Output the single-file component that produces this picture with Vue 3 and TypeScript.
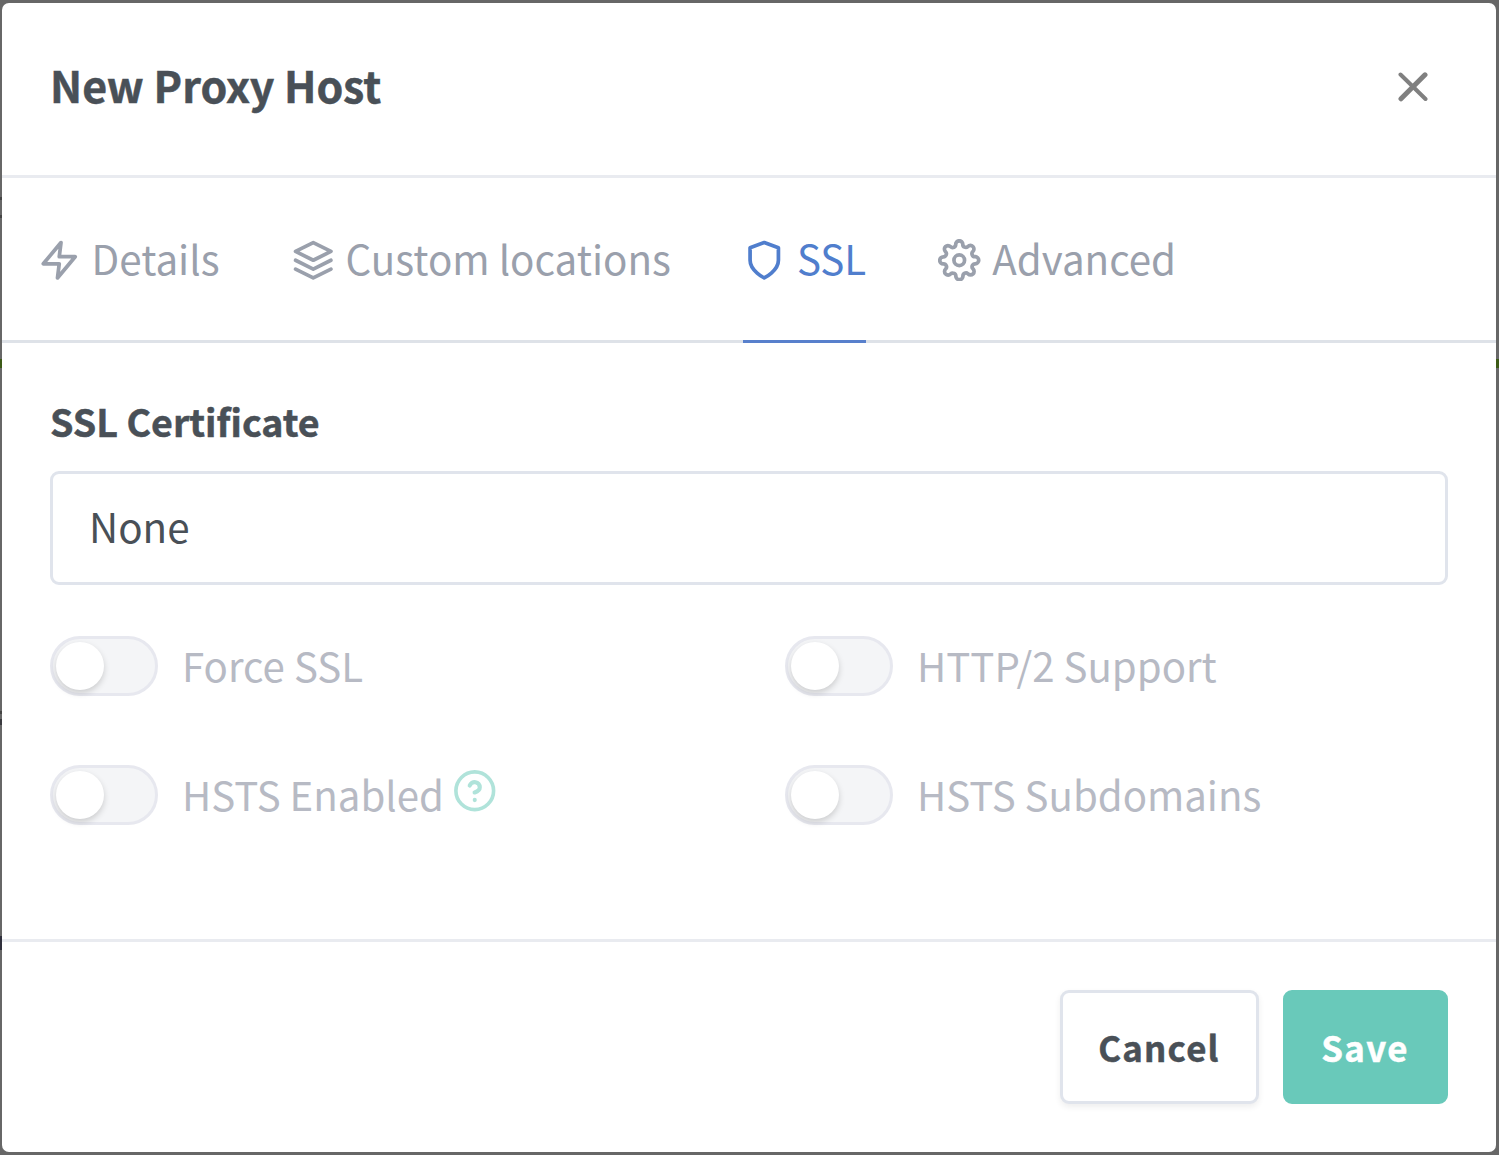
<script setup lang="ts">
import { ref } from 'vue'

interface Tab {
  id: string
  label: string
  icon: string[]
}

const tabs: Tab[] = [
  { id: 'details', label: 'Details', icon: ['M13 2 3 14h9l-1 8 10-12h-9l1-8z'] },
  {
    id: 'locations',
    label: 'Custom locations',
    icon: ['M12 2 2 7l10 5 10-5-10-5z', 'M2 17l10 5 10-5', 'M2 12l10 5 10-5'],
  },
  { id: 'ssl', label: 'SSL', icon: ['M12 22s8-4 8-10V5l-8-3-8 3v7c0 6 8 10 8 10z'] },
  {
    id: 'advanced',
    label: 'Advanced',
    icon: [
      'M12 9a3 3 0 1 0 0 6 3 3 0 0 0 0-6z',
      'M19.4 15a1.65 1.65 0 0 0 .33 1.82l.06.06a2 2 0 0 1 0 2.83 2 2 0 0 1-2.83 0l-.06-.06a1.65 1.65 0 0 0-1.82-.33 1.65 1.65 0 0 0-1 1.51V21a2 2 0 0 1-2 2 2 2 0 0 1-2-2v-.09A1.65 1.65 0 0 0 9 19.4a1.65 1.65 0 0 0-1.82.33l-.06.06a2 2 0 0 1-2.83 0 2 2 0 0 1 0-2.83l.06-.06a1.65 1.65 0 0 0 .33-1.82 1.65 1.65 0 0 0-1.51-1H3a2 2 0 0 1-2-2 2 2 0 0 1 2-2h.09A1.65 1.65 0 0 0 4.6 9a1.65 1.65 0 0 0-.33-1.82l-.06-.06a2 2 0 0 1 0-2.83 2 2 0 0 1 2.83 0l.06.06a1.65 1.65 0 0 0 1.82.33H9a1.65 1.65 0 0 0 1-1.51V3a2 2 0 0 1 2-2 2 2 0 0 1 2 2v.09a1.65 1.65 0 0 0 1 1.51 1.65 1.65 0 0 0 1.82-.33l.06-.06a2 2 0 0 1 2.83 0 2 2 0 0 1 0 2.83l-.06.06a1.65 1.65 0 0 0-.33 1.82V9a1.65 1.65 0 0 0 1.51 1H21a2 2 0 0 1 2 2 2 2 0 0 1-2 2h-.09a1.65 1.65 0 0 0-1.51 1z',
    ],
  },
]

const activeTab = ref('ssl')

const switches = [
  { label: 'Force SSL', help: false },
  { label: 'HTTP/2 Support', help: false },
  { label: 'HSTS Enabled', help: true },
  { label: 'HSTS Subdomains', help: false },
]
</script>

<template>
  <div class="backdrop">
    <section class="modal" role="dialog">
      <header class="modal-header">
        <h5 class="title">New Proxy Host</h5>
        <button class="close" type="button" aria-label="Close">
          <svg viewBox="0 0 32 30" width="32" height="30">
            <path d="M3.5 2.5 28.5 27" stroke-width="4" />
            <path d="M28 2.8 4 26.8" stroke-width="5" />
          </svg>
        </button>
      </header>

      <nav class="tabs">
        <a
          v-for="tab in tabs"
          :key="tab.id"
          class="tab"
          :class="{ active: tab.id === activeTab }"
          @click="activeTab = tab.id"
        >
          <svg class="icon" viewBox="0 0 24 24">
            <path v-for="d in tab.icon" :key="d" :d="d" />
          </svg>
          <span class="tab-label">{{ tab.label }}</span>
        </a>
      </nav>

      <div class="body">
        <label class="field-label">SSL Certificate</label>
        <div class="select">None</div>
        <div class="switches">
          <label v-for="s in switches" :key="s.label" class="switch">
            <span class="track"><span class="knob"></span></span>
            <span class="switch-label">{{ s.label }}</span>
            <svg v-if="s.help" class="icon help" viewBox="0 0 24 24">
              <circle cx="12" cy="12" r="10.9" />
              <path d="M9.09 9a3 3 0 0 1 5.83 1c0 2-3 3-3 3M12 17.3v.1" stroke-width="2.4" />
            </svg>
          </label>
        </div>
      </div>

      <footer class="footer">
        <button class="btn cancel" type="button">Cancel</button>
        <button class="btn save" type="button">Save</button>
      </footer>
    </section>
  </div>
</template>

<style>
body {
  margin: 0;
}
</style>

<style scoped>
* {
  box-sizing: border-box;
}
.backdrop {
  width: 1499px;
  height: 1155px;
  padding: 3px 3px 3px 2px;
  background:
    linear-gradient(#3c5a16, #3c5a16) 0 359px / 100% 9px no-repeat,
    linear-gradient(#444, #444) 0 197px / 2px 3px no-repeat,
    linear-gradient(#444, #444) 0 215px / 2px 3px no-repeat,
    linear-gradient(#444, #444) 0 711px / 2px 3px no-repeat,
    linear-gradient(#3a3a3e, #3a3a3e) 0 719px / 2px 6px no-repeat,
    linear-gradient(#30303c, #30303c) 0 936px / 2px 14px no-repeat,
    #676767;
  font-family: 'Noto Sans CJK JP', 'Noto Sans CJK SC', sans-serif;
  color: #495057;
  overflow: hidden;
}
.modal {
  display: flex;
  flex-direction: column;
  height: 1149px;
  background: #fff;
  border-radius: 7px;
}
.modal-header {
  display: flex;
  align-items: center;
  justify-content: space-between;
  height: 175px;
  padding: 0 67px 4px 48px;
  border-bottom: 3px solid #e9ebf0;
}
.title {
  margin: 0;
  padding-bottom: 6px;
  font-size: 42.9px;
  line-height: 66px;
  font-weight: 700;
  -webkit-text-stroke: 0.5px currentColor;
}
.close {
  display: flex;
  padding: 0;
  border: 0;
  background: none;
}
.close svg {
  fill: none;
  stroke: #808080;
  stroke-linecap: round;
}
.tabs {
  display: flex;
  gap: 72px;
  height: 165px;
  padding-left: 35.5px;
  border-bottom: 3px solid #dee2e8;
}
.tab {
  display: flex;
  align-items: center;
  height: 165px;
  padding-top: 2px;
  border-bottom: 3px solid transparent;
  color: #9aa0ac;
  font-size: 40.3px;
}
.tab.active {
  color: #507ecd;
  border-color: #5880cc;
}
.tab-label {
  margin-left: 11.6px;
  padding-bottom: 6px;
  white-space: nowrap;
}
.icon {
  flex: none;
  width: 42.5px;
  height: 42.5px;
  fill: none;
  stroke: currentColor;
  stroke-width: 2.1;
  stroke-linecap: round;
  stroke-linejoin: round;
}
.body {
  height: 596px;
  padding: 48px 48px 0;
}
.field-label {
  display: block;
  height: 60px;
  margin-bottom: 20px;
  font-size: 37.6px;
  line-height: 60px;
  font-weight: 700;
  -webkit-text-stroke: 0.5px currentColor;
}
.select {
  height: 114px;
  padding-left: 36px;
  border: 3px solid #e0e4ec;
  border-radius: 9px;
  font-size: 40.3px;
  line-height: 104px;
}
.switches {
  display: grid;
  grid-template-columns: 735px 1fr;
  row-gap: 69px;
  margin-top: 51px;
}
.switch {
  display: flex;
  align-items: center;
  height: 60px;
}
.track {
  flex: none;
  width: 108px;
  height: 60px;
  padding: 3px;
  border: 3px solid #e7e8ef;
  border-radius: 30px;
  background: #f4f5f7;
}
.knob {
  display: block;
  width: 48px;
  height: 48px;
  border-radius: 50%;
  background: #fff;
  box-shadow: 0 3px 6px rgba(0, 0, 0, 0.17);
}
.switch-label {
  margin-left: 24px;
  padding-bottom: 4px;
  color: #b7bac4;
  font-size: 40.2px;
  white-space: nowrap;
}
.help {
  width: 41.5px;
  height: 41.5px;
  margin: -8px 0 0 10.5px;
  color: #b0e3da;
}
.footer {
  display: flex;
  justify-content: flex-end;
  gap: 24px;
  height: 213px;
  padding: 48px 48px 0;
  border-top: 3px solid #e9ebf0;
}
.btn {
  height: 114px;
  padding: 0 1px 1px 0;
  border: 3px solid #e0e4ec;
  border-radius: 9px;
  font: 700 34.8px/106px 'Noto Sans CJK JP', 'Noto Sans CJK SC', sans-serif;
  letter-spacing: 1.25px;
  -webkit-text-stroke: 0.5px currentColor;
}
.cancel {
  width: 199px;
  background: #fff;
  color: #495057;
  box-shadow: 0 3px 6px rgba(0, 0, 0, 0.07);
}
.save {
  width: 165px;
  border-color: #69c9ba;
  background: #69c9ba;
  color: #fff;
}
</style>
